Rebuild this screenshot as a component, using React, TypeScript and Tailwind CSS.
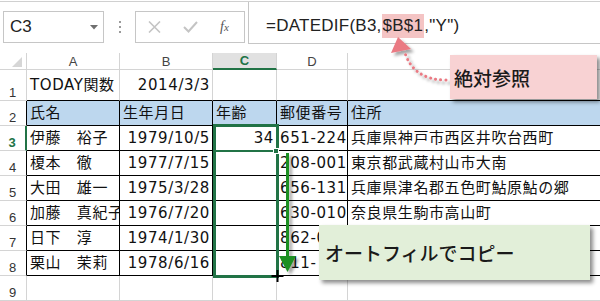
import React from "react";

type C = { t?: string; r?: boolean };

const W = ["w-[93px]", "w-[93px]", "w-[64px]", "w-[71px]"];

function GridRow({
  h,
  num,
  cells,
  kind,
  blue,
  active,
}: {
  h: string;
  num: string;
  cells: C[];
  kind: "plain" | "table" | "empty";
  blue?: boolean;
  active?: boolean;
}) {
  const head =
    kind === "table"
      ? active
        ? "border-r-2 border-r-[#217346]"
        : "border-r border-r-black"
      : "border-r border-r-[#d4d4d4]";
  const bottom = kind === "empty" ? "border-b border-b-[#d4d4d4]" : "border-b border-b-black";
  const right = kind === "table" ? "border-r border-r-black" : "border-r border-r-[#d4d4d4]";
  const bg = blue ? "bg-[#bdd7ee]" : "";
  return (
    <div className={`flex ${h}`}>
      <div
        className={`w-[27px] shrink-0 flex items-end justify-center pb-[1px] text-[13px] leading-none font-['Liberation_Sans',sans-serif] border-b border-b-[#d4d4d4] ${head} ${
          active ? "text-[#217346] font-bold" : "text-[#333]"
        }`}
      >
        {num}
      </div>
      {cells.map((c, i) => (
        <div
          key={i}
          className={`${i < 4 ? W[i] + " shrink-0 " + right : "flex-1"} ${bottom} ${bg} flex items-center overflow-hidden whitespace-nowrap ${
            c.r ? "justify-end pr-[2px]" : "justify-start pl-[3px]"
          }`}
        >
          {c.t}
        </div>
      ))}
    </div>
  );
}

export default function App() {
  const rows: { n: string; c: C[] }[] = [
    { n: "3", c: [{ t: "伊藤　裕子" }, { t: "1979/10/5", r: true }, { t: "34", r: true }, { t: "651-224" }, { t: "兵庫県神戸市西区井吹台西町" }] },
    { n: "4", c: [{ t: "榎本　徹" }, { t: "1977/7/15", r: true }, {}, { t: "208-001" }, { t: "東京都武蔵村山市大南" }] },
    { n: "5", c: [{ t: "大田　雄一" }, { t: "1975/3/28", r: true }, {}, { t: "656-1314" }, { t: "兵庫県津名郡五色町鮎原鮎の郷" }] },
    { n: "6", c: [{ t: "加藤　真紀子" }, { t: "1976/7/20", r: true }, {}, { t: "630-010" }, { t: "奈良県生駒市高山町" }] },
    { n: "7", c: [{ t: "日下　淳" }, { t: "1974/1/30", r: true }, {}, { t: "862-0" }, {}] },
    { n: "8", c: [{ t: "栗山　茉莉" }, { t: "1978/6/16", r: true }, {}, { t: "811-" }, {}] },
  ];

  return (
    <div className="relative w-[600px] h-[301px] overflow-hidden bg-white text-[#111]">
      {/* formula bar */}
      <div className="h-[53px] flex flex-col">
        <div className="mt-[1px] h-px bg-[#d0d0d0]" />
        <div className="flex h-[42px]">
          <div className="w-[248px] shrink-0 flex items-start pl-[3px] pt-[9px]">
            <div className="w-[101px] h-[32px] border border-[#c6c6c6] flex items-center justify-between pl-[6px] pr-[5px]">
              <span className="text-[17px] text-[#222] font-['Liberation_Sans',sans-serif]">C3</span>
              <svg width="8" height="5" viewBox="0 0 8 5">
                <path d="M0 0 L8 0 L4 4.5 Z" fill="#6f6f6f" />
              </svg>
            </div>
            <div className="w-[31px] h-[32px] flex flex-col items-center justify-center gap-[3px]">
              <div className="w-[2px] h-[2px] bg-[#9a9a9a]" />
              <div className="w-[2px] h-[2px] bg-[#9a9a9a]" />
              <div className="w-[2px] h-[2px] bg-[#9a9a9a]" />
            </div>
            <div className="w-[110px] h-[32px] border border-[#c6c6c6] flex items-center pl-[12px] gap-[22px]">
              <svg width="13" height="12" viewBox="0 0 13 12">
                <path d="M1 0.5 L12 11.5 M12 0.5 L1 11.5" stroke="#c4c4c4" strokeWidth="1.6" />
              </svg>
              <svg width="15" height="12" viewBox="0 0 15 12">
                <path d="M1 6 L5.5 10.5 L14 1" stroke="#c4c4c4" strokeWidth="2" fill="none" />
              </svg>
              <span className="text-[14px] italic text-[#555] font-['Liberation_Serif',serif] leading-none">
                f<span className="text-[11px]">x</span>
              </span>
            </div>
          </div>
          <div className="flex-1 border-l border-b border-[#c6c6c6] pl-[17px] pt-[12px]">
            <div className="text-[17px] leading-[24px] text-[#222] font-['Liberation_Sans',sans-serif] tracking-[0.25px] whitespace-nowrap">
              =DATEDIF(B3,<span className="inline-block bg-[#f4c4c4] px-[1px] h-[24px]">$B$1</span>,"Y")
            </div>
          </div>
        </div>
      </div>

      {/* column headers */}
      <div className="flex h-[17px] text-[13px] text-[#444] font-['Liberation_Sans',sans-serif] leading-none">
        <div className="w-[27px] shrink-0 border-r border-b border-[#d4d4d4] flex items-end justify-end pr-[4px] pb-[2px]">
          <svg width="10" height="10" viewBox="0 0 10 10">
            <path d="M10 0 L10 10 L0 10 Z" fill="#d6d6d6" />
          </svg>
        </div>
        <div className="w-[93px] shrink-0 border-r border-b border-[#d4d4d4] flex items-center justify-center">A</div>
        <div className="w-[93px] shrink-0 border-r border-b border-[#d4d4d4] flex items-center justify-center">B</div>
        <div className="w-[64px] shrink-0 border-r border-r-[#d4d4d4] border-b-2 border-b-[#217346] bg-[#e1e1e1] flex items-center justify-center text-[#217346] font-bold">
          C
        </div>
        <div className="w-[71px] shrink-0 border-r border-b border-[#d4d4d4] flex items-center justify-center">D</div>
        <div className="flex-1 border-b border-[#d4d4d4]" />
      </div>

      {/* grid */}
      <div className="text-[15px] tracking-[0.6px] text-[#111] font-['DejaVu_Sans','Noto_Sans_CJK_JP',sans-serif]">
        <GridRow h="h-[31px]" num="1" kind="plain" cells={[{ t: "TODAY関数" }, { t: "2014/3/3", r: true }, {}, {}, {}]} />
        <GridRow
          h="h-[25px]"
          num="2"
          kind="table"
          blue
          cells={[{ t: "氏名" }, { t: "生年月日" }, { t: "年齢" }, { t: "郵便番号" }, { t: "住所" }]}
        />
        {rows.map((r) => (
          <GridRow key={r.n} h="h-[25px]" num={r.n} kind="table" active={r.n === "3"} cells={r.c} />
        ))}
        <GridRow h="h-[25px]" num="9" kind="empty" cells={[{}, {}, {}, {}, {}]} />
      </div>

      {/* selection */}
      <div className="absolute left-[213px] top-[124px] w-[66px] h-[154px] border-[3px] border-[#217346]" />
      <div className="absolute left-[214px] top-[150px] w-[62px] h-[2px] bg-[#217346]" />
      <div className="absolute left-[273px] top-[148px] w-[6px] h-[6px] bg-[#217346] border border-white" />

      {/* arrows */}
      <svg className="absolute left-0 top-0 pointer-events-none" width="600" height="301" viewBox="0 0 600 301">
        <defs>
          <filter id="shd" x="-50%" y="-50%" width="200%" height="200%">
            <feDropShadow dx="3" dy="3" stdDeviation="1.6" floodColor="#000" floodOpacity="0.35" />
          </filter>
        </defs>
        <g filter="url(#shd)">
          <path
            d="M446 80 Q414 80 405 53"
            stroke="#ea7a83"
            strokeWidth="3"
            strokeDasharray="0.1 5"
            strokeLinecap="round"
            fill="none"
          />
          <path d="M398 37 L391 53 L411 49 Z" fill="#ea7a83" />
        </g>
        <g filter="url(#shd)">
          <line x1="287.5" y1="153" x2="287.5" y2="258" stroke="#1f8f24" strokeWidth="3" />
          <path d="M279 256 L296 256 L287.5 272 Z" fill="#1f8f24" />
        </g>
        <path d="M277.5 270 L277.5 282 M271.5 276 L283.5 276" stroke="#000" strokeWidth="2" />
      </svg>

      {/* callouts */}
      <div className="absolute left-[450px] top-[55px] w-[147px] h-[44px] bg-[#f8d2d3] shadow-[3px_3px_4px_rgba(0,0,0,0.45)] flex items-center pl-[4px]">
        <span className="text-[19px] text-[#1a1a1a] font-['Noto_Sans_CJK_JP',sans-serif] font-medium leading-none">絶対参照</span>
      </div>
      <div className="absolute left-[319px] top-[225px] w-[271px] h-[55px] bg-[#e2efd9] shadow-[3px_3px_4px_rgba(0,0,0,0.45)] flex items-center pl-[6px]">
        <span className="text-[19px] text-[#1a1a1a] font-['Noto_Sans_CJK_JP',sans-serif] font-medium leading-none">
          オートフィルでコピー
        </span>
      </div>
    </div>
  );
}
